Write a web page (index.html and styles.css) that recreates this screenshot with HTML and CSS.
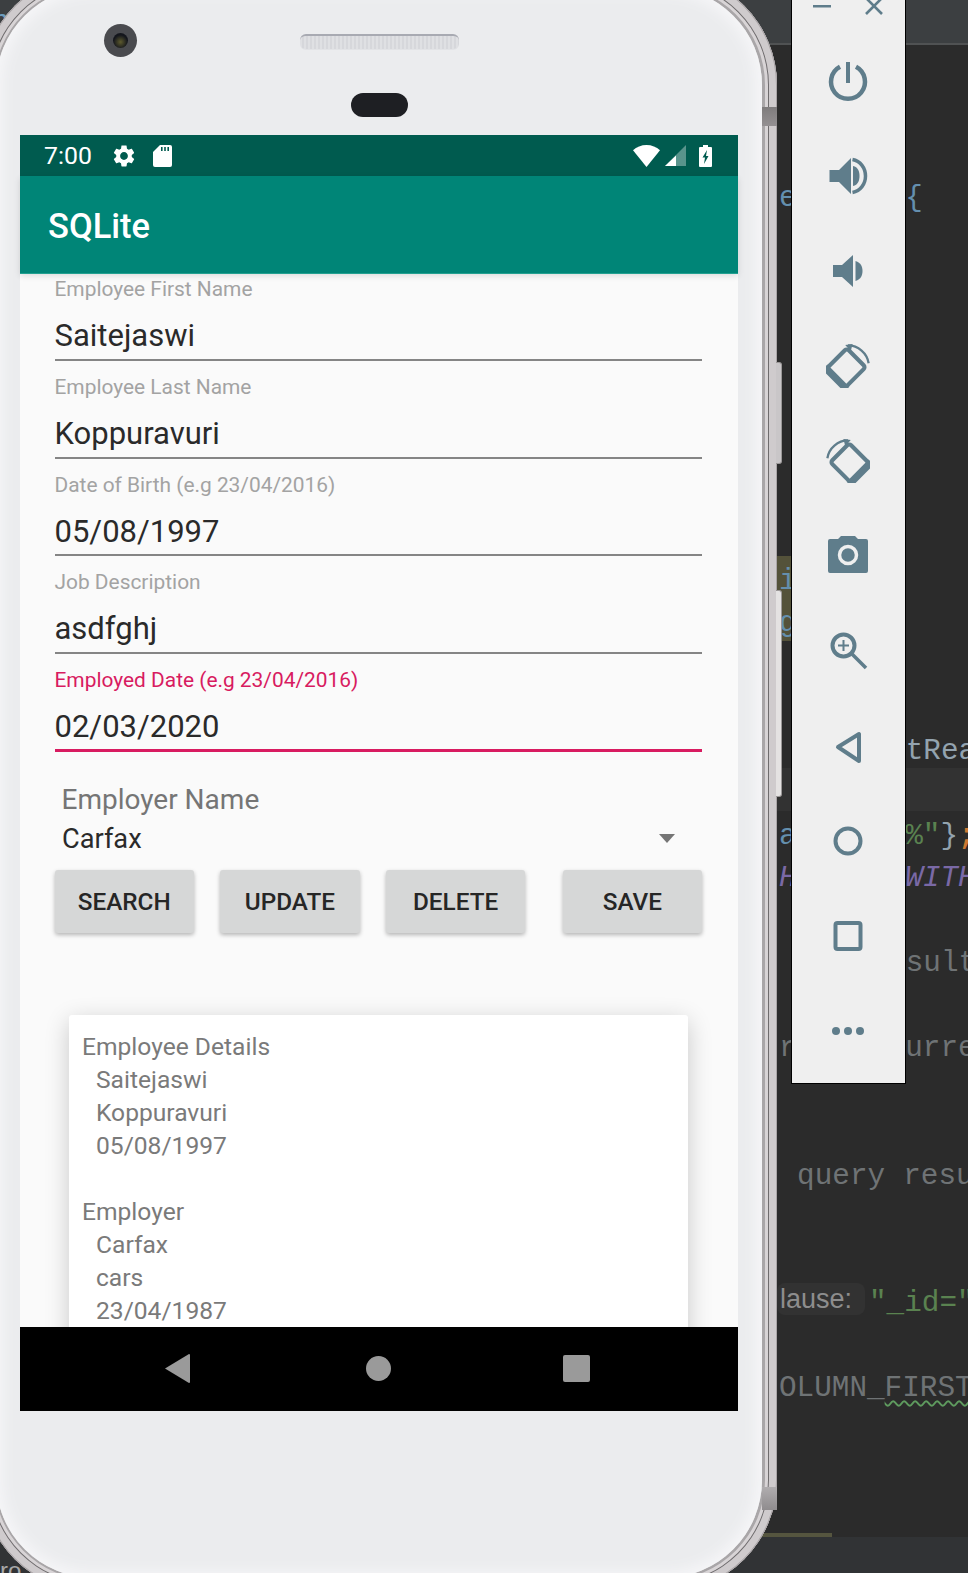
FILE: index.html
```html
<!DOCTYPE html>
<html lang="en">
<head>
<meta charset="utf-8">
<title>SQLite</title>
<link rel="stylesheet" href="styles.css">
</head>
<body>
<div class="desk">
  <div class="topbar"><span class="corner-text">n</span></div>
  <pre class="code"><span class="row c-blue">e      <span class="c-plain">{</span></span>
<span class="row"> </span>
<span class="row"> </span>
<span class="row"> </span>
<span class="row"> </span>
<span class="row"> </span>
<span class="row"> </span>
<span class="row"> </span>
<span class="row"> </span>
<span class="row olive c-blue">i</span>
<span class="row olive c-blue">g</span>
<span class="row"> </span>
<span class="row"> </span>
<span class="row c-light">       tRead</span>
<span class="row caret"> </span>
<span class="row c-blue">a      <span class="c-green">%"</span><span class="c-light">}</span><span class="c-orange">;</span></span>
<span class="row c-purple">H      WITH</span>
<span class="row"> </span>
<span class="row c-grey">       sult</span>
<span class="row"> </span>
<span class="row c-grey">r      urre</span>
<span class="row"> </span>
<span class="row"> </span>
<span class="row c-grey"> query resu</span>
<span class="row"> </span>
<span class="row"> </span>
<span class="row c-green"><span class="chip">lause:</span>"_id="</span>
<span class="row"> </span>
<span class="row c-grey">OLUMN_<span class="wavy">FIRST</span></span></pre>
  <div class="scroll-mark"></div>
  <div class="statusline"><span class="corner-text-low">ro</span></div>

  <div class="phone">
    <span class="side-btn power"></span>
    <span class="side-btn volume"></span>
    <span class="band band-top"></span>
    <span class="band band-bottom"></span>
    <div class="bezel">
      <div class="head">
        <span class="camera"><span class="lens"></span></span>
        <span class="speaker"></span>
        <span class="sensor"></span>
      </div>
      <div class="screen">
        <div class="status">
          <span class="time">7:00</span>
          <svg class="st-gear" viewBox="0 0 24 24"><path fill="#fff" d="M19.14 12.94c.04-.3.06-.61.06-.94 0-.32-.02-.64-.07-.94l2.03-1.58c.18-.14.23-.41.12-.61l-1.92-3.32c-.12-.22-.37-.29-.59-.22l-2.39.96c-.5-.38-1.03-.7-1.62-.94l-.36-2.54c-.04-.24-.24-.41-.48-.41h-3.84c-.24 0-.43.17-.47.41l-.36 2.54c-.59.24-1.13.57-1.62.94l-2.39-.96c-.22-.08-.47 0-.59.22L2.74 8.87c-.12.21-.08.47.12.61l2.03 1.58c-.05.3-.09.63-.09.94s.02.64.07.94l-2.03 1.58c-.18.14-.23.41-.12.61l1.92 3.32c.12.22.37.29.59.22l2.39-.96c.5.38 1.03.7 1.62.94l.36 2.54c.05.24.24.41.48.41h3.84c.24 0 .44-.17.47-.41l.36-2.54c.59-.24 1.13-.56 1.62-.94l2.39.96c.22.08.47 0 .59-.22l1.92-3.32c.12-.22.07-.47-.12-.61l-2.01-1.58zM12 15.6c-1.98 0-3.6-1.62-3.6-3.6s1.62-3.6 3.6-3.6 3.6 1.62 3.6 3.6-1.62 3.6-3.6 3.6z"/></svg>
          <svg class="st-sd" viewBox="0 0 19 22"><path fill="#fff" d="M7 0h10a2 2 0 0 1 2 2v18a2 2 0 0 1-2 2H2a2 2 0 0 1-2-2V7z"/><path fill="#005b4f" d="M8 2h1.6v4H8zM11.2 2h1.6v4h-1.6zM14.4 2H16v4h-1.6z"/></svg>
          <span class="st-fill"></span>
          <svg class="st-wifi" viewBox="0 0 27 22"><path fill="#fff" d="M13.5 22 0 5.2C3.6 2 8.3 0 13.5 0S23.400 2 27 5.200z"/></svg>
          <svg class="st-signal" viewBox="0 0 21 21"><path fill="#fff" fill-opacity=".35" d="M21 0v21H0z"/><path fill="#fff" d="M11 10.500V21H0z"/></svg>
          <svg class="st-battery" viewBox="0 0 13 22"><path fill="#fff" d="M4 0h5v2h3a1 1 0 0 1 1 1v18a1 1 0 0 1-1 1H1a1 1 0 0 1-1-1V3a1 1 0 0 1 1-1h3z"/><path fill="#005b4f" d="M8 5 3.500 12.500H6L5 19l4.500-8H7z"/></svg>
        </div>
        <div class="appbar">SQLite</div>
        <div class="content">
          <div class="field first">
            <div class="label">Employee First Name</div>
            <div class="value">Saitejaswi</div>
          </div>
          <div class="field">
            <div class="label">Employee Last Name</div>
            <div class="value">Koppuravuri</div>
          </div>
          <div class="field">
            <div class="label">Date of Birth (e.g 23/04/2016)</div>
            <div class="value">05/08/1997</div>
          </div>
          <div class="field">
            <div class="label">Job Description</div>
            <div class="value">asdfghj</div>
          </div>
          <div class="field active">
            <div class="label">Employed Date (e.g 23/04/2016)</div>
            <div class="value">02/03/2020</div>
          </div>
          <div class="spinner">
            <div class="sp-label">Employer Name</div>
            <div class="sp-row"><span>Carfax</span><span class="arrow"></span></div>
          </div>
          <div class="buttons">
            <div class="btn">SEARCH</div>
            <div class="btn">UPDATE</div>
            <div class="btn">DELETE</div>
            <div class="btn btn-last">SAVE</div>
          </div>
          <div class="card">
            <div>Employee Details</div>
            <div class="indent">Saitejaswi</div>
            <div class="indent">Koppuravuri</div>
            <div class="indent">05/08/1997</div>
            <div class="blank"></div>
            <div>Employer</div>
            <div class="indent">Carfax</div>
            <div class="indent">cars</div>
            <div class="indent">23/04/1987</div>
          </div>
        </div>
        <div class="nav">
          <svg class="nav-back" viewBox="0 0 25 29"><path fill="#9a9a9a" d="M24 0a1 1 0 0 1 1 1v27a1 1 0 0 1-1 1L0 14.500z"/></svg>
          <span class="nav-home"></span>
          <span class="nav-recent"></span>
        </div>
      </div>
    </div>
  </div>

  <aside class="panel">
    <div class="win">
      <svg class="win-min" viewBox="0 0 18 3"><path fill="#5f7d8b" d="M0 0h18v2.500H0z"/></svg>
      <svg class="win-close" viewBox="0 0 18 18"><path stroke="#5f7d8b" stroke-width="2.600" fill="none" d="M1 1l16 16M17 1 1 17"/></svg>
    </div>
    <div class="tool"><svg viewBox="0 0 44 44"><path fill="none" stroke="#5f7d8b" stroke-width="4.500" d="M14 7.800A17 17 0 1 0 30 7.800"/><path fill="#5f7d8b" d="M20 3h4v21h-4z"/></svg></div>
    <div class="tool"><svg viewBox="0 0 44 44"><path fill="#5f7d8b" d="M3.500 16H13L25 4v36L13 28H3.500z"/><path fill="#5f7d8b" d="M27 12c5 1 6.500 5.500 6.500 10S32 31 27 32z"/><path fill="none" stroke="#5f7d8b" stroke-width="3.500" d="M26.500 5.500C34.500 7 39.500 14 39.500 22S34.500 37 26.500 38.500"/></svg></div>
    <div class="tool"><svg viewBox="0 0 44 44"><path fill="#5f7d8b" d="M7 16h9L27 6v32L16 28H7z"/><path fill="#5f7d8b" d="M29.500 12C35 13.500 36.500 18 36.500 22S35 30.500 29.500 32z"/></svg></div>
    <div class="tool"><svg viewBox="0 0 48 48"><g transform="rotate(45 22 26)"><rect x="7.500" y="10.500" width="29" height="31" rx="3" fill="none" stroke="#5f7d8b" stroke-width="4.500"/><path fill="#5f7d8b" d="M5 38h34v5a3 3 0 0 1-3 3H8a3 3 0 0 1-3-3z"/></g><path fill="none" stroke="#5f7d8b" stroke-width="2.500" d="M24 1.500C35 1.500 45 10 46.500 21"/><path fill="#5f7d8b" d="M21 1 29 0l-2 8z"/></svg></div>
    <div class="tool"><svg class="mirror" viewBox="0 0 48 48"><g transform="rotate(45 22 26)"><rect x="7.500" y="10.500" width="29" height="31" rx="3" fill="none" stroke="#5f7d8b" stroke-width="4.500"/><path fill="#5f7d8b" d="M5 38h34v5a3 3 0 0 1-3 3H8a3 3 0 0 1-3-3z"/></g><path fill="none" stroke="#5f7d8b" stroke-width="2.500" d="M24 1.500C35 1.500 45 10 46.500 21"/><path fill="#5f7d8b" d="M21 1 29 0l-2 8z"/></svg></div>
    <div class="tool"><svg viewBox="0 2 44 44"><path fill="#5f7d8b" d="M4 7h8l3-3h14l3 3h8a2 2 0 0 1 2 2v30a2 2 0 0 1-2 2H4a2 2 0 0 1-2-2V9a2 2 0 0 1 2-2z"/><circle cx="22" cy="23" r="8.500" fill="none" stroke="#efefef" stroke-width="3.500"/></svg></div>
    <div class="tool"><svg viewBox="0 1 44 44"><circle cx="17.500" cy="17.500" r="11" fill="none" stroke="#5f7d8b" stroke-width="4"/><path stroke="#5f7d8b" stroke-width="3.500" d="M26 26l14 14"/><path stroke="#5f7d8b" stroke-width="2" d="M12 17.500h11M17.500 12v11"/></svg></div>
    <div class="tool"><svg viewBox="0 0 44 44"><path fill="none" stroke="#5f7d8b" stroke-width="4" stroke-linejoin="round" d="M12 23 33 10v27z"/></svg></div>
    <div class="tool"><svg viewBox="0 0 44 44"><circle cx="22" cy="22" r="12.500" fill="none" stroke="#5f7d8b" stroke-width="4"/></svg></div>
    <div class="tool"><svg viewBox="0 0 44 44"><rect x="9.500" y="9" width="25" height="26" rx="2" fill="none" stroke="#5f7d8b" stroke-width="4"/></svg></div>
    <div class="tool"><svg viewBox="0 0 44 44"><circle cx="10" cy="22" r="4" fill="#5f7d8b"/><circle cx="22" cy="22" r="4" fill="#5f7d8b"/><circle cx="34" cy="22" r="4" fill="#5f7d8b"/></svg></div>
  </aside>
</div>
</body>
</html>
```
FILE: styles.css
```css
* { box-sizing: border-box; }
html, body { margin: 0; padding: 0; height: 100%; overflow: hidden; }
body { background: #2b2b2b; font-family: Roboto, "Noto Sans", sans-serif; }

.desk { position: relative; width: 968px; height: 1573px; overflow: hidden; background: #2b2b2b; }

/* IDE behind the emulator */
.topbar { position: absolute; inset: 0 0 auto 0; height: 45px; background: #3c3f41; border-bottom: 2px solid #505253; }
.corner-text { position: absolute; left: -8px; top: 6px; font: 29px "Liberation Mono", monospace; color: #6d9cbe; }
.statusline { position: absolute; inset: 1537px 0 0 0; background: #313335; }
.corner-text-low { position: absolute; left: 0; top: 20px; font: 24px "Liberation Sans", sans-serif; color: #a8a8a8; }
.scroll-mark { position: absolute; left: 760px; top: 1533px; width: 72px; height: 4px; background: #55553f; }

.code { position: absolute; left: 779px; top: 173px; right: 0; margin: 0; font: 29.330px "Liberation Mono", monospace; line-height: 0; word-spacing: 0.500px; color: #808080; white-space: pre; }
.row { display: block; height: 42.500px; line-height: 42.500px; margin-left: -2px; padding: 5px 0 0 2px; }
.olive { background: #54523a; width: 16px; overflow: hidden; }
.caret { background: #323232; }
.c-blue { color: #648fae; }
.c-plain { color: #648fae; }
.c-light { color: #93a3af; }
.c-green { color: #5a8250; }
.c-orange { color: #cc7832; font-weight: bold; }
.c-purple { color: #7a69a6; font-style: italic; }
.c-grey { color: #6f7375; }
.chip { display: inline-block; width: 88px; margin-left: -2px; margin-right: 4px; padding-left: 3px; background: #323232; border-radius: 8px; font: 27px/32px "Liberation Sans", sans-serif; color: #8d8d8d; vertical-align: 3px; }
.wavy { text-decoration: underline wavy #5e9b5e 1.500px; text-underline-offset: 4px; }

/* Phone */
.phone { position: absolute; left: -18px; top: -27px; width: 795px; height: 1619px; padding: 14px 15px 14px 14px; border-radius: 112px; background: #a9a6a8;
  box-shadow: inset 0 0 0 1px #aaa5a7, inset 0 0 0 8px #cfcbcd, inset 0 0 0 9px #6f6c6e, inset 0 0 0 12px #d8d4d6; }
.side-btn { position: absolute; width: 6px; background: #c9c6c8; border: 1px solid #9b9898; border-left: 0; border-radius: 0 3px 3px 0; }
.power { left: 794px; top: 389px; height: 102px; }
.volume { left: 794px; top: 617px; height: 207px; background: #e4e2e2; }
.band { position: absolute; left: 780px; width: 15px; height: 19px; background: linear-gradient(#7f7c7d, #949092); }
.band-top { top: 134px; }
.band-bottom { top: 1514px; height: 23px; background: linear-gradient(#b0adaf, #8f8c8e); }

.bezel { position: relative; height: 100%; border-radius: 98px; background: #ebecee; box-shadow: inset 0 0 14px 6px #f6f6f8; overflow: hidden; padding: 0 24px; }
.head { position: relative; height: 148px; }
.camera { position: absolute; left: 84px; top: 37px; width: 33px; height: 33px; border-radius: 50%; background: #4a4b4f; display: flex; align-items: center; justify-content: center; }
.lens { width: 15px; height: 15px; border-radius: 50%; background: radial-gradient(circle at 50% 60%, #5d5a2e 0, #14161c 60%); }
.speaker { position: absolute; left: 280px; top: 47px; width: 159px; height: 16px; border-radius: 6px; background: repeating-linear-gradient(90deg, #dfe0e3 0 2px, #d6d7db 2px 4px); border-top: 2px solid #a8aab2; border-bottom: 1px solid #e2e3e6; }
.sensor { position: absolute; left: 331px; top: 106px; width: 57px; height: 24px; border-radius: 12px; background: #1e1f23; }

.screen { width: 718px; height: 1276px; display: flex; flex-direction: column; background: #fafafa; }
.status { height: 41px; flex: none; background: #005b4f; display: flex; align-items: center; padding: 0 26px 0 24px; color: #fff; }
.time { font-size: 24.800px; width: 67px; }
.st-gear { width: 26px; height: 26px; }
.st-sd { width: 19px; height: 22px; margin-left: 16px; }
.st-fill { flex: 1; }
.st-wifi { width: 27px; height: 22px; }
.st-signal { width: 21px; height: 21px; margin-left: 5px; }
.st-battery { width: 13px; height: 22px; margin-left: 13px; }
.appbar { height: 98px; flex: none; background: #008577; border-bottom: 1px solid #22a090; color: #fff; font-size: 34.500px; font-weight: 500; line-height: 100px; padding-left: 28px; position: relative; z-index: 1; box-shadow: 0 2px 6px rgba(0, 0, 0, .12); }
.content { flex: 1; min-height: 0; overflow: hidden; padding: 0 36px 0 35px; }

.field { height: 97.750px; padding-top: 13px; border-bottom: 2px solid #858585; }
.field.first { margin-top: -11px; }
.field.active { border-bottom: 3px solid #d81b60; }
.label { font-size: 20.900px; line-height: 26px; color: #a3a3a3; margin-bottom: 12px; margin-left: -0.500px; }
.active .label { color: #d81b60; }
.value { font-size: 31px; line-height: 44px; color: #2a2a2a; margin-left: -0.500px; }

.spinner { padding: 28px 27px 0 7px; }
.sp-label { font-size: 28px; line-height: 40px; color: #757575; margin-left: -0.500px; }
.sp-row { display: flex; justify-content: space-between; align-items: center; margin-top: -1px; font-size: 27.200px; line-height: 40px; color: #2a2a2a; }
.arrow { width: 0; height: 0; border-left: 8.500px solid transparent; border-right: 8.500px solid transparent; border-top: 9px solid #757575; }

.buttons { display: flex; gap: 26.300px; margin: 11px 0 0 -0.500px; }
.btn { width: 139.500px; height: 63px; background: #d6d7d7; border-radius: 3px; box-shadow: 0 2px 4px rgba(0, 0, 0, .28); display: flex; align-items: center; justify-content: center; font-size: 24.300px; font-weight: 500; color: #262626; }
.btn-last { margin-left: 11px; }

.card { margin: 82px 14px 0 13.500px; background: #fff; border-radius: 3px; box-shadow: 0 6px 24px rgba(0, 0, 0, .2); padding: 15.500px 15px 30px 13.500px; font-size: 24.600px; line-height: 33px; color: #7a7a7a; }
.indent { padding-left: 14px; }
.blank { height: 33px; }

.nav { height: 84px; flex: none; background: #000; display: flex; align-items: center; padding-bottom: 2px; position: relative; z-index: 1; }
.nav-back { width: 25px; height: 29px; margin-left: 145px; }
.nav-home { width: 25px; height: 25px; border-radius: 50%; background: #9a9a9a; margin-left: 176px; }
.nav-recent { width: 27px; height: 27px; border-radius: 2px; background: #9a9a9a; margin-left: 172px; }

/* Emulator tool panel */
.panel { position: absolute; left: 791px; top: -1px; width: 115px; height: 1085px; background: #efefef; border: 1px solid #000; display: flex; flex-direction: column; align-items: center; padding-right: 2px; }
.win { height: 33px; width: 100%; flex: none; position: relative; }
.win-min { position: absolute; left: 21px; top: 5px; width: 18px; height: 3px; }
.win-close { position: absolute; left: 73px; top: -3px; width: 18px; height: 18px; }
.tool { height: 95px; flex: none; display: flex; align-items: center; justify-content: center; }
.tool svg { width: 44px; height: 44px; }
.tool svg.mirror { transform: scaleX(-1); }
```
